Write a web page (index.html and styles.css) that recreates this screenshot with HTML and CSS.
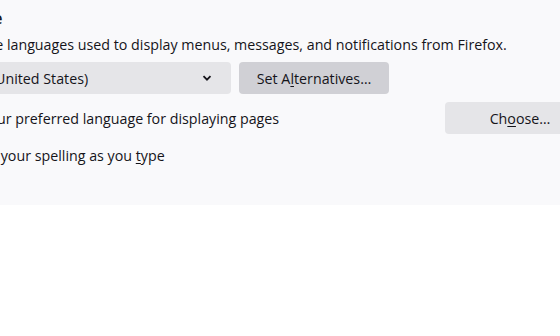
FILE: index.html
```html
<!DOCTYPE html>
<html lang="en">
<head>
  <meta charset="UTF-8">
  <title>Language</title>
  <link rel="stylesheet" href="styles.css">
</head>
<body>
  <div class="pane">
    <div class="content">
      <h2 class="heading">Language</h2>
      <p class="desc">Choose the languages used to display menus, messages, and notifications from Firefox.</p>

      <div class="row">
        <div class="menulist">
          <span>English (United States)</span>
          <svg class="chevron" width="12" height="12" viewBox="0 0 12 12">
            <path d="M2.5 4.2 L6 7.7 L9.5 4.2" fill="none" stroke="#15141a" stroke-width="1.8"/>
          </svg>
        </div>
        <button class="btn btn-active">Set A<u>l</u>ternatives…</button>
      </div>

      <div class="row row-split">
        <span class="label">Choose your preferred language for displaying pages</span>
        <button class="btn">Ch<u>o</u>ose…</button>
      </div>

      <label class="check">
        <span class="box"></span>
        <span>Check your spelling as you <u>t</u>ype</span>
      </label>
    </div>
  </div>
</body>
</html>
```

FILE: styles.css
```css
html, body {
  margin: 0;
  padding: 0;
  background-color: #ffffff;
  overflow: hidden;
}

body {
  font-family: 'Open Sans', 'Noto Sans', sans-serif;
  font-size: 14.25px;
  color: #15141a;
}

.pane {
  background-color: #f9f9fb;
  height: 205px;
  padding-top: 5px;
  box-sizing: border-box;
}

.content {
  width: 667px;
  margin-left: -72px;
}

.heading {
  font-size: 16px;
  font-weight: 600;
  margin: 0;
  line-height: 26px;
}

.desc {
  margin: 3px 0 0;
  line-height: 22px;
}

u {
  text-underline-offset: 2px;
}

.row {
  display: flex;
  align-items: center;
  gap: 8px;
  margin-top: 6px;
}

.menulist {
  width: 303px;
  height: 32px;
  box-sizing: border-box;
  background-color: #e5e5e8;
  border-radius: 4px;
  display: flex;
  align-items: center;
  justify-content: space-between;
  padding: 0 18px 0 12px;
}

.chevron {
  display: block;
}

.btn {
  font-family: inherit;
  font-size: 14.25px;
  color: #15141a;
  width: 150px;
  height: 32px;
  padding: 0;
  white-space: nowrap;
  border: none;
  border-radius: 4px;
  background-color: #e5e5e8;
}

.btn-active {
  background-color: #d0d0d5;
}

.row-split {
  justify-content: space-between;
  margin-top: 8px;
}

.check {
  display: flex;
  align-items: center;
  gap: 13px;
  margin-top: 11px;
  line-height: 22px;
}

.box {
  width: 16px;
  height: 16px;
  border: 1px solid #8f8f9d;
  border-radius: 2px;
  box-sizing: border-box;
}
```
